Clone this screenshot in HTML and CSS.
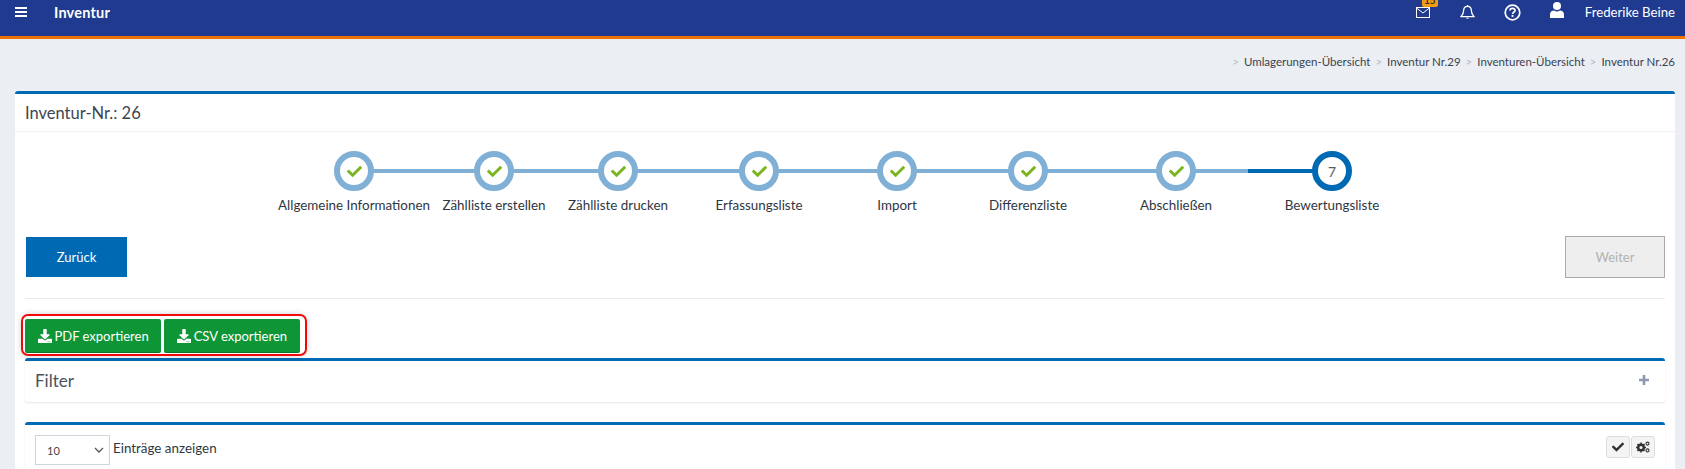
FILE: index.html
```html
<!DOCTYPE html>
<html lang="de">
<head>
<meta charset="utf-8">
<title>Inventur</title>
<link rel="stylesheet" href="styles.css">
</head>
<body>
<header class="topbar">
  <svg class="burger" viewBox="0 0 12 10" width="12" height="10"><path d="M0 0h12v2H0zM0 4h12v2H0zM0 8h12v2H0z" fill="#fff"/></svg>
  <span class="app-title">Inventur</span>
  <div class="top-actions">
    <span class="top-icon mail">
      <svg viewBox="0 0 14 11" width="14" height="11"><rect x=".5" y=".5" width="13" height="10" fill="none" stroke="#fff"/><path d="M.5 1l6.5 5 6.5-5" fill="none" stroke="#fff"/></svg>
      <span class="badge">15</span>
    </span>
    <span class="top-icon bell">
      <svg viewBox="0 0 14 14" width="15" height="15"><path d="M7 1.2c-2.4 0-3.6 1.8-3.6 4 0 3-1.2 4.3-2.4 5.6h12c-1.200-1.300-2.400-2.600-2.400-5.600 0-2.200-1.200-4-3.600-4z" fill="none" stroke="#fff" stroke-width="1.200"/><path d="M5.500 11.800a1.600 1.600 0 0 0 3 0z" fill="#fff"/><rect x="6.400" y="0" width="1.200" height="1.500" fill="#fff"/></svg>
    </span>
    <span class="top-icon help">
      <svg viewBox="0 0 17 17" width="17" height="17"><circle cx="8.500" cy="8.500" r="7.300" fill="none" stroke="#fff" stroke-width="1.700"/><path d="M6 6.600c0-1.500 1.100-2.300 2.500-2.300s2.500.8 2.500 2.100c0 1.800-2.400 1.800-2.400 3.500" fill="none" stroke="#fff" stroke-width="1.700"/><rect x="7.600" y="11" width="1.900" height="1.900" fill="#fff"/></svg>
    </span>
    <span class="top-icon user">
      <svg viewBox="0 0 14 16" width="14" height="16"><circle cx="7" cy="4" r="4" fill="#fff"/><path d="M0 16v-3.500C0 10 2 8.500 4 8.500c1 .6 2 .9 3 .9s2-.3 3-.9c2 0 4 1.500 4 4V16z" fill="#fff"/></svg>
    </span>
    <span class="user-name">Frederike Beine</span>
  </div>
</header>

<nav class="crumbs">
  <span class="sep">&gt;</span><span>Umlagerungen-Übersicht</span>
  <span class="sep">&gt;</span><span>Inventur Nr.29</span>
  <span class="sep">&gt;</span><span>Inventuren-Übersicht</span>
  <span class="sep">&gt;</span><span>Inventur Nr.26</span>
</nav>

<main class="card">
  <h1 class="card-title">Inventur-Nr.: 26</h1>
  <div class="card-body">
    <ol class="steps">
      <li class="step w1 done"><span class="dot"><svg class="tick" viewBox="0 0 512 512" width="15" height="15"><path d="M173.898 439.404l-166.4-166.4c-9.997-9.997-9.997-26.206 0-36.204l36.203-36.204c9.997-9.998 26.207-9.998 36.204 0L192 312.69 432.095 72.596c9.997-9.997 26.207-9.997 36.204 0l36.203 36.204c9.997 9.997 9.997 26.206 0 36.204l-294.4 294.401c-9.998 9.997-26.207 9.997-36.204-.001z"/></svg></span><span class="label">Allgemeine Informationen</span></li>
      <li class="step w2 done"><span class="dot"><svg class="tick" viewBox="0 0 512 512" width="15" height="15"><path d="M173.898 439.404l-166.4-166.4c-9.997-9.997-9.997-26.206 0-36.204l36.203-36.204c9.997-9.998 26.207-9.998 36.204 0L192 312.69 432.095 72.596c9.997-9.997 26.207-9.997 36.204 0l36.203 36.204c9.997 9.997 9.997 26.206 0 36.204l-294.4 294.401c-9.998 9.997-26.207 9.997-36.204-.001z"/></svg></span><span class="label">Zählliste erstellen</span></li>
      <li class="step w3 done"><span class="dot"><svg class="tick" viewBox="0 0 512 512" width="15" height="15"><path d="M173.898 439.404l-166.4-166.4c-9.997-9.997-9.997-26.206 0-36.204l36.203-36.204c9.997-9.998 26.207-9.998 36.204 0L192 312.69 432.095 72.596c9.997-9.997 26.207-9.997 36.204 0l36.203 36.204c9.997 9.997 9.997 26.206 0 36.204l-294.4 294.401c-9.998 9.997-26.207 9.997-36.204-.001z"/></svg></span><span class="label">Zählliste drucken</span></li>
      <li class="step w4 done"><span class="dot"><svg class="tick" viewBox="0 0 512 512" width="15" height="15"><path d="M173.898 439.404l-166.4-166.4c-9.997-9.997-9.997-26.206 0-36.204l36.203-36.204c9.997-9.998 26.207-9.998 36.204 0L192 312.69 432.095 72.596c9.997-9.997 26.207-9.997 36.204 0l36.203 36.204c9.997 9.997 9.997 26.206 0 36.204l-294.4 294.401c-9.998 9.997-26.207 9.997-36.204-.001z"/></svg></span><span class="label">Erfassungsliste</span></li>
      <li class="step w5 done"><span class="dot"><svg class="tick" viewBox="0 0 512 512" width="15" height="15"><path d="M173.898 439.404l-166.4-166.4c-9.997-9.997-9.997-26.206 0-36.204l36.203-36.204c9.997-9.998 26.207-9.998 36.204 0L192 312.69 432.095 72.596c9.997-9.997 26.207-9.997 36.204 0l36.203 36.204c9.997 9.997 9.997 26.206 0 36.204l-294.4 294.401c-9.998 9.997-26.207 9.997-36.204-.001z"/></svg></span><span class="label">Import</span></li>
      <li class="step w6 done"><span class="dot"><svg class="tick" viewBox="0 0 512 512" width="15" height="15"><path d="M173.898 439.404l-166.4-166.4c-9.997-9.997-9.997-26.206 0-36.204l36.203-36.204c9.997-9.998 26.207-9.998 36.204 0L192 312.69 432.095 72.596c9.997-9.997 26.207-9.997 36.204 0l36.203 36.204c9.997 9.997 9.997 26.206 0 36.204l-294.4 294.401c-9.998 9.997-26.207 9.997-36.204-.001z"/></svg></span><span class="label">Differenzliste</span></li>
      <li class="step w7 done"><span class="dot"><svg class="tick" viewBox="0 0 512 512" width="15" height="15"><path d="M173.898 439.404l-166.4-166.4c-9.997-9.997-9.997-26.206 0-36.204l36.203-36.204c9.997-9.998 26.207-9.998 36.204 0L192 312.69 432.095 72.596c9.997-9.997 26.207-9.997 36.204 0l36.203 36.204c9.997 9.997 9.997 26.206 0 36.204l-294.4 294.401c-9.998 9.997-26.207 9.997-36.204-.001z"/></svg></span><span class="label">Abschließen</span></li>
      <li class="step w8 current"><span class="dot">7</span><span class="label">Bewertungsliste</span></li>
    </ol>

    <div class="nav-row">
      <button class="btn-back" type="button">Zurück</button>
      <button class="btn-next" type="button" disabled>Weiter</button>
    </div>
    <hr class="rule">

    <div class="export-highlight">
      <button class="btn-export" type="button"><svg viewBox="0 0 512 512" width="14" height="14"><path d="M216 0h80c13.3 0 24 10.7 24 24v168h87.7c17.8 0 26.7 21.5 14.1 34.1L269.7 378.3c-7.5 7.5-19.8 7.5-27.3 0L90.1 226.1c-12.6-12.6-3.7-34.1 14.1-34.1H192V24c0-13.3 10.7-24 24-24zm296 376v112c0 13.3-10.7 24-24 24H24c-13.3 0-24-10.7-24-24V376c0-13.3 10.7-24 24-24h146.7l49 49c20.1 20.1 52.5 20.1 72.6 0l49-49H488c13.3 0 24 10.7 24 24zm-124 88c0-11-9-20-20-20s-20 9-20 20 9 20 20 20 20-9 20-20zm64 0c0-11-9-20-20-20s-20 9-20 20 9 20 20 20 20-9 20-20z" fill="#fff"/></svg>PDF exportieren</button>
      <button class="btn-export" type="button"><svg viewBox="0 0 512 512" width="14" height="14"><path d="M216 0h80c13.3 0 24 10.7 24 24v168h87.7c17.8 0 26.7 21.5 14.1 34.1L269.7 378.3c-7.5 7.5-19.8 7.5-27.3 0L90.1 226.1c-12.6-12.6-3.7-34.1 14.1-34.1H192V24c0-13.3 10.7-24 24-24zm296 376v112c0 13.3-10.7 24-24 24H24c-13.3 0-24-10.7-24-24V376c0-13.3 10.7-24 24-24h146.7l49 49c20.1 20.1 52.5 20.1 72.6 0l49-49H488c13.3 0 24 10.7 24 24zm-124 88c0-11-9-20-20-20s-20 9-20 20 9 20 20 20 20-9 20-20zm64 0c0-11-9-20-20-20s-20 9-20 20 9 20 20 20 20-9 20-20z" fill="#fff"/></svg>CSV exportieren</button>
    </div>

    <section class="panel filter">
      <h2 class="panel-title">Filter</h2>
      <svg viewBox="0 0 10 10" width="10" height="10"><path d="M3.700 0h2.600v3.700H10v2.600H6.300V10H3.700V6.300H0V3.700h3.700z" fill="#8f98b3"/></svg>
    </section>

    <section class="panel table-panel">
      <div class="length">
        <span class="fake-select">10<svg viewBox="0 0 10 6" width="10" height="6"><path d="M1 1l4 4 4-4" fill="none" stroke="#555" stroke-width="1.300"/></svg></span>
        <span class="length-label">Einträge anzeigen</span>
      </div>
      <div class="tools">
        <button class="tool" type="button"><svg viewBox="0 0 512 512" width="12" height="12"><path d="M173.898 439.404l-166.4-166.4c-9.997-9.997-9.997-26.206 0-36.204l36.203-36.204c9.997-9.998 26.207-9.998 36.204 0L192 312.69 432.095 72.596c9.997-9.997 26.207-9.997 36.204 0l36.203 36.204c9.997 9.997 9.997 26.206 0 36.204l-294.4 294.401c-9.998 9.997-26.207 9.997-36.204-.001z" fill="#333"/></svg></button>
        <button class="tool" type="button"><svg viewBox="0 0 14 12" width="14" height="12"><g fill="none" stroke="#333"><circle cx="5" cy="6.500" r="2.800" stroke-width="2.400"/><path d="M5 1.500v2M5 9.500v2M0 6.500h2M8 6.500h2M1.500 3l1.400 1.400M7.100 8.600L8.500 10M1.500 10l1.400-1.400M7.100 4.400L8.500 3" stroke-width="1.500"/><circle cx="11.500" cy="2.600" r="1.500" stroke-width="1.100"/><circle cx="11.500" cy="9.400" r="1.500" stroke-width="1.100"/></g></svg></button>
      </div>
    </section>
  </div>
</main>
</body>
</html>
```
FILE: styles.css
```css
* { box-sizing: border-box; }
html, body { margin: 0; padding: 0; }
body {
  height: 469px;
  overflow: hidden;
  background: #ebeef3;
  color: #2f3742;
  font-family: "Lato", "Noto Sans", sans-serif;
  font-size: 14px;
}
.topbar {
  height: 39px;
  background: #1f3a8f;
  border-bottom: 3px solid #ee7203;
  color: #fff;
  display: flex;
  align-items: center;
  padding: 0 10px 0 15px;
}
.burger { margin-top: -13px; }
.app-title { margin-left: 27px; font-weight: 700; font-size: 14.5px; margin-top: -12px; letter-spacing: .2px; }
.top-actions { margin-left: auto; display: flex; align-items: center; }
.top-icon { display: flex; position: relative; }
.mail { margin-top: -12px; }
.bell { margin-left: 30px; margin-top: -12px; }
.help { margin-left: 29px; margin-top: -12px; }
.user { margin-left: 29px; margin-top: -17px; }
.badge {
  position: absolute;
  left: 6px;
  top: -12px;
  width: 16px;
  height: 12px;
  background: #f39c12;
  border-radius: 2px;
  color: #333;
  font-size: 10px;
  font-weight: 700;
  line-height: 11px;
  text-align: center;
}
.user-name { margin-left: 21px; font-size: 13.2px; margin-top: -12px; }
.crumbs {
  display: flex;
  justify-content: flex-end;
  align-items: center;
  height: 52px;
  padding: 0 10px 7px 0;
  font-size: 11.5px;
  color: #3a4250;
}
.sep { color: #b9bdc4; margin: 0 5px; }
.card {
  margin: 0 10px 0 15px;
  background: #fff;
  border-top: 3px solid #0069b4;
  border-radius: 3px 3px 0 0;
}
.card-title {
  margin: 0;
  height: 38px;
  padding: 0 10px;
  display: flex;
  align-items: center;
  font-size: 16.5px;
  font-weight: 400;
  color: #3d4550;
  border-bottom: 1px solid #eef0f3;
}
.card-body { padding: 0 10px; }
.steps {
  list-style: none;
  margin: 0;
  padding: 19px 0 0 255px;
  display: flex;
}
.step {
  position: relative;
  flex: none;
  display: flex;
  flex-direction: column;
  align-items: center;
  white-space: nowrap;
}
.w1 { width: 148px; }
.w2 { width: 132px; }
.w3 { width: 116px; }
.w4 { width: 166px; }
.w5 { width: 110px; }
.w6 { width: 152px; }
.w7 { width: 144px; }
.w8 { width: 168px; }
.step::before, .step::after {
  content: "";
  position: absolute;
  top: 18px;
  height: 4px;
  width: 50%;
  background: #80b0d6;
}
.step::before { left: 0; }
.step::after { right: 0; }
.w1::before, .w8::after { display: none; }
.current::before { background: #0069b4; }
.dot {
  position: relative;
  z-index: 1;
  width: 40px;
  height: 40px;
  border: 6px solid #80b0d6;
  border-radius: 50%;
  background: #fff;
  display: flex;
  align-items: center;
  justify-content: center;
  font-size: 14px;
  color: #555d68;
}
.current .dot { border-color: #0069b4; }
.tick { fill: #7ab51d; }
.label { margin-top: 4px; line-height: 20px; font-size: 13.4px; }
.nav-row {
  margin-top: 22px;
  display: flex;
  justify-content: space-between;
  align-items: flex-start;
}
.btn-back {
  margin-left: 1px;
  width: 101px;
  height: 40px;
  border: 0;
  background: #0069b4;
  color: #fff;
  font: inherit;
  font-size: 13px;
}
.btn-next {
  width: 100px;
  height: 42px;
  border: 1px solid #aaa;
  background: #eee;
  color: #b2b2b2;
  font: inherit;
  font-size: 13px;
  margin-top: -1px;
}
.rule { margin: 20px 0 15px; border: 0; border-top: 1px solid #eaeaea; }
.export-highlight {
  display: inline-flex;
  gap: 3px;
  padding: 3px 5px 1px 2px;
  margin-left: -4px;
  border: 2px solid #f00a0a;
  border-radius: 7px;
  box-shadow: 0 0 6px rgba(0, 0, 0, .18);
  vertical-align: top;
}
.btn-export {
  height: 34px;
  padding: 0 12.5px;
  border: 0;
  border-radius: 2px;
  background: #0e9636;
  color: #fff;
  font: inherit;
  font-size: 13px;
  display: flex;
  align-items: center;
  gap: 3px;
  box-shadow: inset 0 -1px 0 rgba(0, 0, 0, .2);
}
.panel {
  background: #fff;
  border-top: 3px solid #0069b4;
  border-radius: 3px;
  box-shadow: 0 1px 2px rgba(0, 0, 0, .1);
}
.filter {
  margin-top: 2px;
  height: 44px;
  padding: 0 16px 3px 10px;
  display: flex;
  align-items: center;
  justify-content: space-between;
}
.panel-title { margin: 0; font-size: 17px; font-weight: 400; color: #4a525e; }
.table-panel {
  margin-top: 20px;
  height: 60px;
  padding: 10px 10px 0;
  display: flex;
  justify-content: space-between;
  align-items: flex-start;
}
.length { display: flex; align-items: flex-start; }
.fake-select {
  width: 75px;
  height: 30px;
  border: 1px solid #cfd3db;
  padding: 0 5px 0 11px;
  display: flex;
  align-items: center;
  justify-content: space-between;
  font-size: 11px;
  color: #444;
}
.length-label { margin: 5px 0 0 3px; font-size: 13.4px; }
.tools { display: flex; gap: 1px; margin-top: 1px; }
.tool {
  width: 24px;
  height: 22px;
  padding: 0;
  border: 1px solid #ddd;
  border-radius: 3px;
  background: #f4f4f4;
  display: flex;
  align-items: center;
  justify-content: center;
}
```
